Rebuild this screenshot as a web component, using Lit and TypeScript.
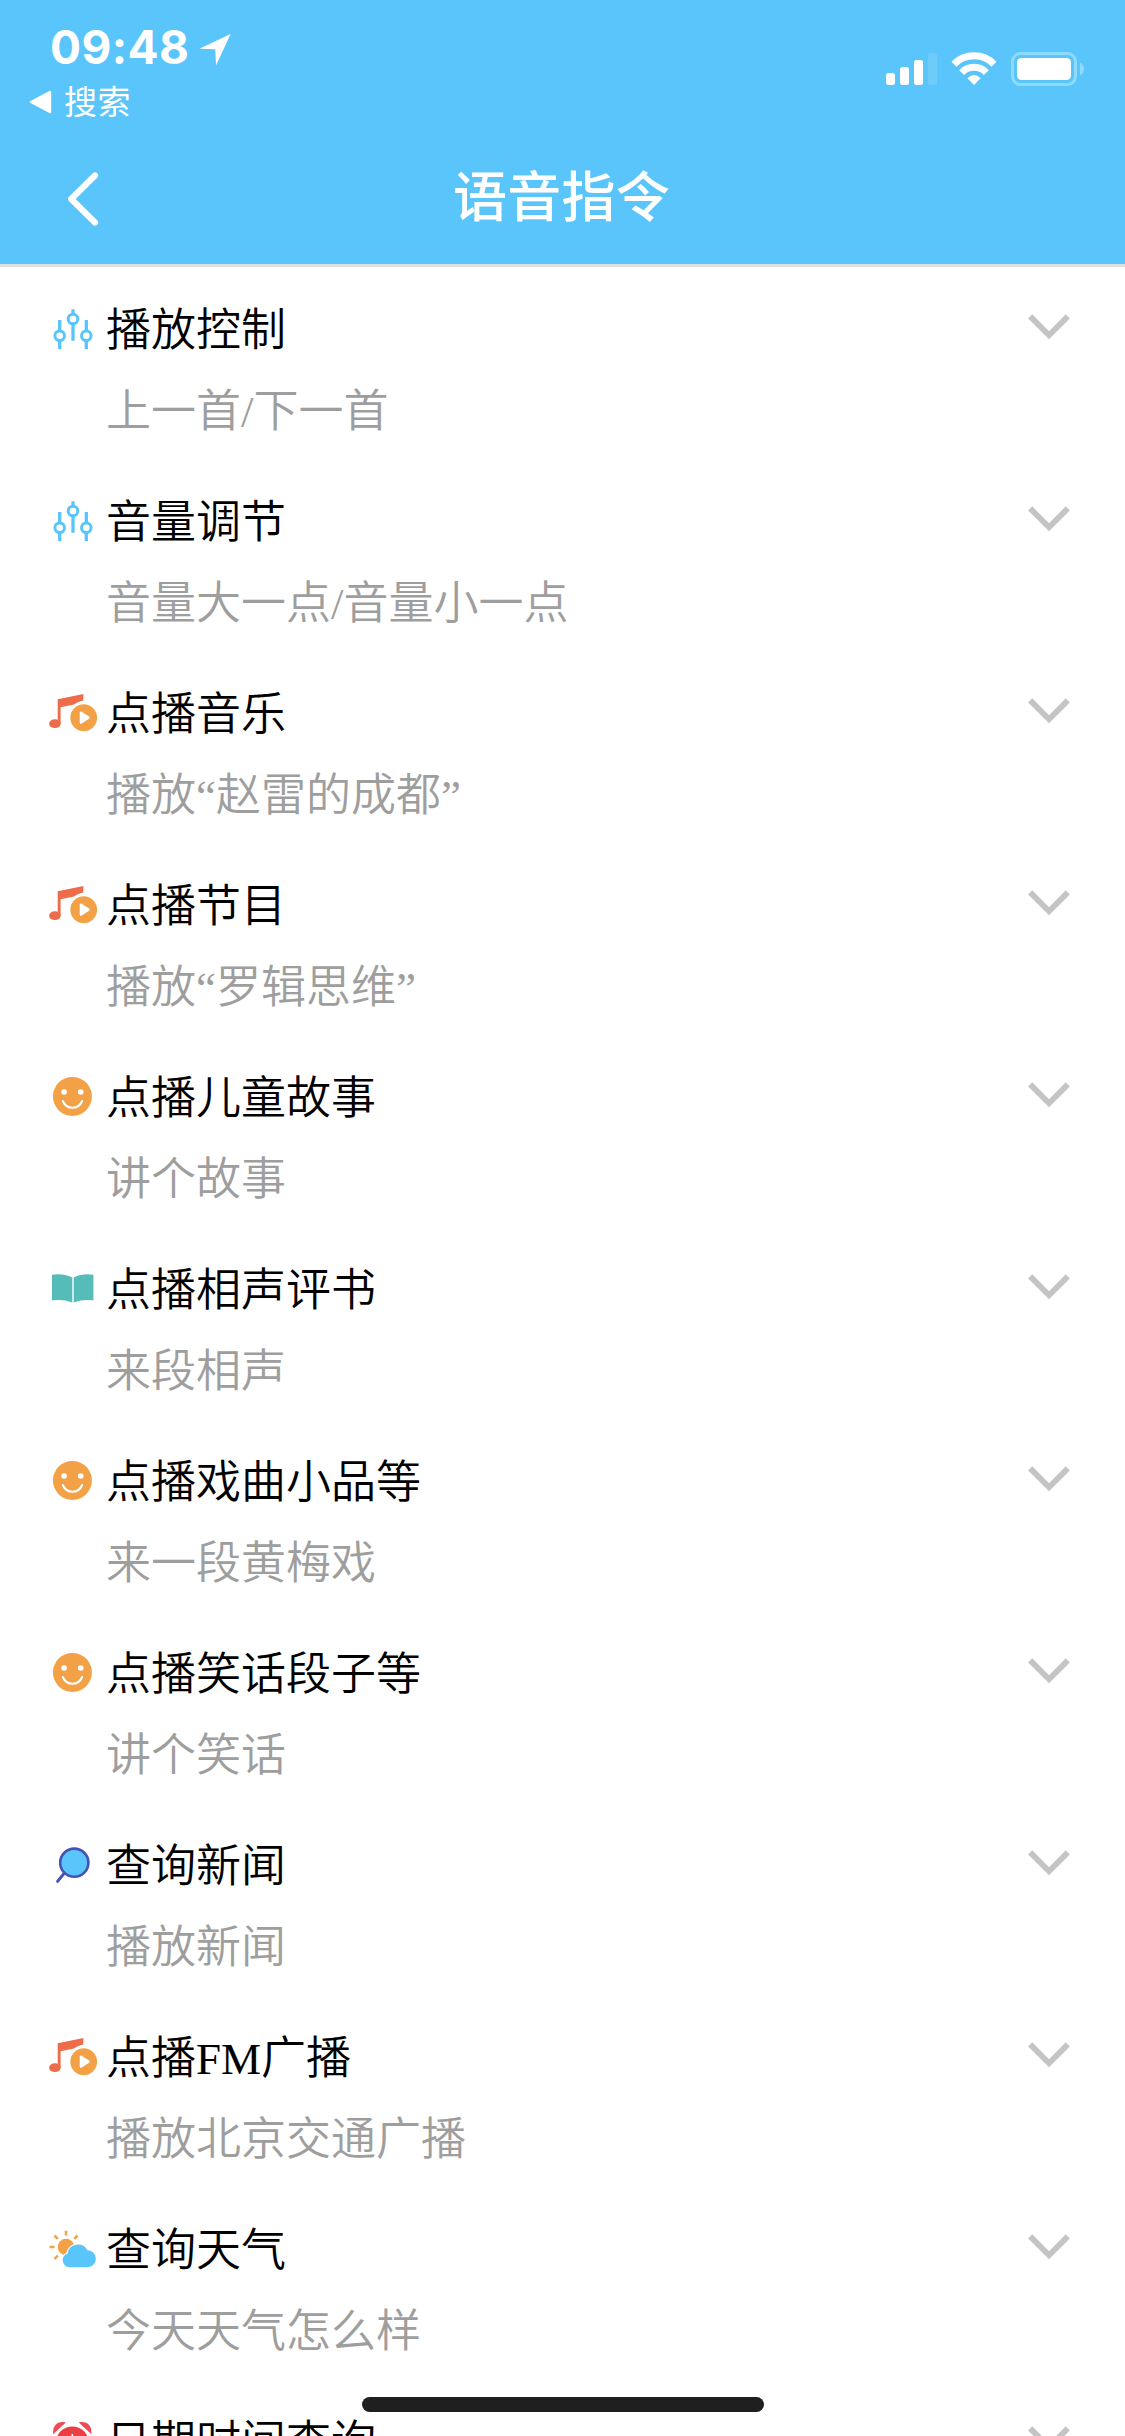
import { LitElement, html, css, svg, type TemplateResult } from "lit";
import { customElement, property } from "lit/decorators.js";

type IconName = "sliders" | "music" | "smile" | "book" | "search" | "weather" | "alarm";

interface Command {
  icon: IconName;
  title: string;
  example: string;
}

const COMMANDS: Command[] = [
  { icon: "sliders", title: "播放控制", example: "上一首/下一首" },
  { icon: "sliders", title: "音量调节", example: "音量大一点/音量小一点" },
  { icon: "music", title: "点播音乐", example: "播放“赵雷的成都”" },
  { icon: "music", title: "点播节目", example: "播放“罗辑思维”" },
  { icon: "smile", title: "点播儿童故事", example: "讲个故事" },
  { icon: "book", title: "点播相声评书", example: "来段相声" },
  { icon: "smile", title: "点播戏曲小品等", example: "来一段黄梅戏" },
  { icon: "smile", title: "点播笑话段子等", example: "讲个笑话" },
  { icon: "search", title: "查询新闻", example: "播放新闻" },
  { icon: "music", title: "点播FM广播", example: "播放北京交通广播" },
  { icon: "weather", title: "查询天气", example: "今天天气怎么样" },
  { icon: "alarm", title: "日期时间查询", example: "" },
];

const ICONS: Record<IconName, TemplateResult> = {
  sliders: svg`
    <g fill="none" stroke="#5ac5fa" stroke-width="3.3">
      <path d="M13.7 15V25.5M13.7 35.5V44M27 4.3V9M27 19V35.7M40.3 15V25.5M40.3 35.5V44"/>
      <circle cx="13.7" cy="30.7" r="4.8" stroke-width="3"/>
      <circle cx="27" cy="14" r="4.8" stroke-width="3"/>
      <circle cx="40.3" cy="30.7" r="4.8" stroke-width="3"/>
    </g>`,
  music: svg`
    <path fill="#ee6c4a" d="M11.7 10.2 37.3 5V11.4C33 12.2 30.5 13.7 28 15.4L14.6 18.2V34.7H11.7Z"/>
    <ellipse cx="8.9" cy="34.7" rx="5.8" ry="4.4" fill="#ee6c4a"/>
    <circle cx="37.7" cy="28.7" r="13.4" fill="#f2a146"/>
    <path d="M35 23.9V33.5L42.4 28.7Z" fill="#fff" stroke="#fff" stroke-width="2.6" stroke-linejoin="round"/>`,
  smile: svg`
    <circle cx="26.4" cy="23.4" r="19.5" fill="#f2a146"/>
    <circle cx="18.1" cy="19" r="2.8" fill="#fff"/>
    <circle cx="34.7" cy="19" r="2.8" fill="#fff"/>
    <path d="M16.8 28C20.6 37 32.4 37 36.2 28" fill="none" stroke="#fff" stroke-width="2" stroke-linecap="round"/>`,
  book: svg`
    <path fill="#56bcb8" d="M6 9.8C12.5 8.6 20 9.4 26.3 12.6V37.4C20 34.9 12.5 34.4 6 35.4ZM47.4 9.8C41 8.6 34 9.4 27.7 12.6V37.4C34 34.9 41 34.4 47.4 35.4Z"/>`,
  search: svg`
    <path d="M18.6 31.8 11.6 40.4" stroke="#4453b4" stroke-width="3" stroke-linecap="round"/>
    <circle cx="28.3" cy="21.7" r="14.1" fill="#5ac5fa" stroke="#4453b4" stroke-width="2.6"/>`,
  weather: svg`
    <circle cx="20" cy="22" r="8.3" fill="#f2a146"/>
    <path d="M20 5.8V10.4M3.6 22H8.6M8.5 10.5 11.8 13.8M31.6 10.5 28.3 13.8M8.5 34 11.8 30.6" stroke="#f2a146" stroke-width="2.5"/>
    <path d="M23 42.2A6.9 6.9 0 0 1 21.5 28.8A10.6 10.6 0 0 1 41.4 25.2A8.5 8.5 0 0 1 41.4 42.2Z" fill="#5ac5fa" stroke="#fff" stroke-width="2.6" paint-order="stroke"/>`,
  alarm: svg`
    <path d="M7.2 17.2C6.2 8.4 12 3.6 19.8 5.4ZM45.4 17.2C46.4 8.4 40.6 3.6 32.8 5.4Z" fill="#ee4a58"/>
    <circle cx="26.3" cy="26" r="16.6" fill="#ea4043"/>
    <path d="M26.3 17V27H33" fill="none" stroke="#fff" stroke-width="1.6"/>`,
};

@customElement("status-bar")
class StatusBar extends LitElement {
  static styles = css`
    :host {
      display: flex;
      justify-content: space-between;
      height: 132px;
      box-sizing: border-box;
      padding: 17px 40px 0 29px;
      color: #fff;
    }
    .clock {
      display: flex;
      align-items: center;
      gap: 10px;
      height: 60px;
      padding-left: 21px;
    }
    .time {
      width: 139px;
      white-space: nowrap;
      font: 700 46px/60px Inter, "Liberation Sans", sans-serif;
      letter-spacing: 0.4px;
    }
    .arrow {
      margin-top: 5px;
    }
    .back {
      display: flex;
      align-items: center;
      gap: 12px;
      height: 60px;
      margin-top: -7px;
      font: 400 33px/60px "Noto Sans CJK SC", sans-serif;
    }
    .triangle {
      margin-top: 4px;
    }
    .label {
      letter-spacing: 0.5px;
    }
    .status {
      margin-top: 33px;
    }
    svg {
      display: block;
    }
  `;

  render() {
    return html`
      <div>
        <div class="clock">
          <span class="time">09:48</span>
          <svg class="arrow" width="32" height="32" viewBox="0 0 32 32">
            <path d="M31.6 0 17 31.6 16.3 15.2 0.4 14.8Z" fill="#fff"/>
          </svg>
        </div>
        <div class="back">
          <svg class="triangle" width="23" height="24" viewBox="0 0 23 24">
            <path d="M2 12 21 2V22Z" fill="#fff" stroke="#fff" stroke-width="2.4" stroke-linejoin="round"/>
          </svg>
          <span class="label">搜索</span>
        </div>
      </div>
      <svg class="status" width="200" height="40" viewBox="885 50 200 40">
        <g fill="#fff">
          <rect x="886" y="73" width="9" height="12" rx="2.5"/>
          <rect x="900" y="67" width="9" height="18" rx="2.5"/>
          <rect x="914" y="60" width="9" height="25" rx="2.5"/>
          <rect x="928" y="53" width="9" height="32" rx="2.5" opacity=".12"/>
          <path d="M974 85 967.4 78.2Q974 72 980.6 78.2Z"/>
        </g>
        <g fill="none" stroke="#fff" stroke-width="7">
          <path d="M954 64.2A28 28 0 0 1 994 64.2"/>
          <path d="M961.7 72.6A17 17 0 0 1 986.3 72.6"/>
        </g>
        <rect x="1012.5" y="53.5" width="63" height="31" rx="8" fill="none" stroke="#8edafa" stroke-width="3"/>
        <rect x="1017" y="58" width="54" height="22" rx="4.5" fill="#fff"/>
        <path d="M1080 62.7Q1084 64.5 1084 69T1080 75.3Z" fill="#8edafa"/>
      </svg>
    `;
  }
}

@customElement("nav-bar")
class NavBar extends LitElement {
  @property() heading = "";

  static styles = css`
    :host {
      display: grid;
      grid-template-columns: 160px 1fr 160px;
      align-items: center;
      height: 132px;
      padding-bottom: 10px;
      box-sizing: border-box;
      color: #fff;
    }
    .back {
      display: block;
      margin: 11px 0 0 66px;
    }
    .heading {
      margin: 2px 2px 0 0;
      text-align: center;
      font: 500 54px/80px "Noto Sans CJK SC", sans-serif;
      letter-spacing: 0.3px;
    }
  `;

  render() {
    return html`
      <svg class="back" width="34" height="60" viewBox="0 0 34 60">
        <path d="M29 6.5 5.2 30 29 53.5" fill="none" stroke="#fff" stroke-width="6.2" stroke-linecap="round" stroke-linejoin="round"/>
      </svg>
      <h1 class="heading">${this.heading}</h1>
    `;
  }
}

@customElement("command-row")
class CommandRow extends LitElement {
  @property({ attribute: false }) command!: Command;

  static styles = css`
    :host {
      display: grid;
      grid-template-columns: 54px 1fr 44px;
      column-gap: 6px;
      height: 192px;
      box-sizing: border-box;
      padding: 34px 54px 0 46px;
      font: 350 45px/60px "Liberation Serif", "Noto Sans CJK SC", serif;
    }
    .icon {
      display: block;
      margin-top: 4px;
    }
    .title {
      color: #000;
    }
    .example {
      margin-top: 21px;
      color: #9e9e9e;
    }
    .arrow {
      display: block;
      margin-top: 12px;
    }
  `;

  render() {
    return html`
      <svg class="icon" width="54" height="48" viewBox="0 0 54 48">${ICONS[this.command.icon]}</svg>
      <div>
        <div class="title">${this.command.title}</div>
        <div class="example">${this.command.example}</div>
      </div>
      <svg class="arrow" width="44" height="30" viewBox="0 0 44 30">
        <path d="M3.2 3.4 22 22.2 40.8 3.4" fill="none" stroke="#c4c4c4" stroke-width="5.8"/>
      </svg>
    `;
  }
}

@customElement("app-root")
class AppRoot extends LitElement {
  static styles = css`
    :host {
      display: block;
      position: relative;
      width: 1125px;
      height: 2436px;
      overflow: hidden;
      background: #fff;
    }
    .header {
      background: #5ac5fa;
      border-bottom: 3px solid #dedede;
    }
    .home {
      position: absolute;
      left: 362px;
      top: 2397px;
      width: 402px;
      height: 15px;
      border-radius: 8px;
      background: #1f1f1f;
    }
  `;

  render() {
    return html`
      <header class="header">
        <status-bar></status-bar>
        <nav-bar heading="语音指令"></nav-bar>
      </header>
      <main>${COMMANDS.map((c) => html`<command-row .command=${c}></command-row>`)}</main>
      <div class="home"></div>
    `;
  }
}
